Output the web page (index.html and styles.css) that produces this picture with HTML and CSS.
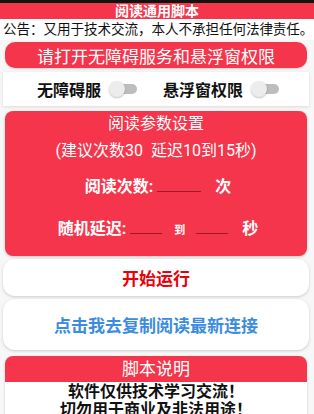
FILE: index.html
```html
<!DOCTYPE html>
<html lang="zh">
<head>
  <meta charset="UTF-8">
  <title>阅读通用脚本</title>
  <link rel="stylesheet" href="styles.css">
</head>
<body>

  <!-- Top -->
  <div class="statusbar"></div>
  <div class="titlebar">阅读通用脚本</div>
  <div class="notice">公告：又用于技术交流，本人不承担任何法律责任。</div>

  <button class="perm-btn">请打开无障碍服务和悬浮窗权限</button>

  <!-- Switches -->
  <div class="switch-card">
    <div class="switch-item">
      <span>无障碍服</span>
      <div class="toggle"><div class="track"></div><div class="thumb"></div></div>
    </div>
    <div class="switch-item">
      <span>悬浮窗权限</span>
      <div class="toggle"><div class="track"></div><div class="thumb"></div></div>
    </div>
  </div>

  <!-- Params -->
  <div class="param-card">
    <div class="param-title">阅读参数设置</div>
    <div class="param-hint">(建议次数30&nbsp;&nbsp;延迟10到15秒)</div>
    <div class="param-row">
      <span>阅读次数:</span>
      <span class="blank wide"></span>
      <span class="unit">次</span>
    </div>
    <div class="param-row">
      <span>随机延迟:</span>
      <span class="blank"></span>
      <span class="to">到</span>
      <span class="blank"></span>
      <span class="unit">秒</span>
    </div>
  </div>

  <button class="white-btn start">开始运行</button>
  <button class="white-btn copy">点击我去复制阅读最新连接</button>

  <!-- Info -->
  <div class="info-card">
    <div class="info-head">脚本说明</div>
    <div class="info-body">
      <div>软件仅供技术学习交流！</div>
      <div>切勿用于商业及非法用途！</div>
    </div>
  </div>

</body>
</html>
```

FILE: styles.css
```css
body {
  margin: 0;
  font-family: Roboto, "Noto Sans CJK SC", sans-serif;
  background-color: #f7f7f7;
  overflow: hidden;
}

.statusbar {
  height: 3px;
  background-color: #111;
}

.titlebar {
  height: 16px;
  line-height: 16px;
  background-color: #f4354b;
  color: white;
  font-size: 14px;
  font-weight: bold;
  text-align: center;
}

.notice {
  height: 21px;
  line-height: 21px;
  padding-left: 3px;
  font-size: 13.6px;
  letter-spacing: -0.1px;
  color: #111;
  background-color: white;
  white-space: nowrap;
}

.perm-btn {
  display: block;
  width: 302px;
  height: 26px;
  margin: 2px 0 0 5px;
  border: none;
  border-radius: 10px;
  background-color: #f4354b;
  color: white;
  font-family: inherit;
  font-size: 17px;
  padding: 0;
  box-shadow: 0 1px 2px rgba(0,0,0,0.15);
}

.switch-card {
  margin: 4px 5px 0 3px;
  height: 34px;
  background-color: white;
  box-shadow: 0 1px 3px rgba(0,0,0,0.12);
  display: flex;
  align-items: center;
  justify-content: center;
  gap: 26px;
  padding-left: 4px;
}

.switch-item {
  display: flex;
  align-items: center;
  gap: 8px;
  font-size: 16px;
  font-weight: bold;
  color: #111;
}

.toggle {
  position: relative;
  width: 28px;
  height: 16px;
}

.track {
  position: absolute;
  left: 4px;
  top: 3px;
  width: 24px;
  height: 10px;
  border-radius: 5px;
  background-color: #bdbdbd;
}

.thumb {
  position: absolute;
  left: 0;
  top: 0;
  width: 16px;
  height: 16px;
  border-radius: 50%;
  background-color: #ececec;
  box-shadow: 0 1px 2px rgba(0,0,0,0.25);
}

.param-card {
  margin: 5px 7px 0 5px;
  height: 145px;
  background-color: #f4354b;
  border-radius: 8px;
  color: white;
  text-align: center;
  box-shadow: 0 1px 3px rgba(0,0,0,0.2);
}

.param-title {
  padding-top: 2px;
  font-size: 16px;
  line-height: 22px;
}

.param-hint {
  font-size: 16px;
  line-height: 22px;
  margin-top: 5px;
}

.param-row {
  display: flex;
  justify-content: center;
  align-items: baseline;
  font-size: 16px;
  font-weight: bold;
  margin-top: 13px;
  line-height: 22px;
  padding-left: 4px;
}

.param-row + .param-row {
  margin-top: 19px;
}

.blank {
  display: inline-block;
  width: 32px;
  height: 16px;
  border-bottom: 1px solid #9a1a26;
  margin-left: 4px;
}

.blank.wide {
  width: 44px;
}

.to {
  font-size: 11px;
  margin: 0 7px 0 12px;
}

.unit {
  margin-left: 14px;
}

.white-btn {
  display: block;
  width: 306px;
  margin: 3px 0 0 3px;
  border: none;
  border-radius: 12px;
  background-color: white;
  font-family: inherit;
  font-size: 17px;
  padding: 0;
  box-shadow: 0 1px 3px rgba(0,0,0,0.18);
}

.start {
  height: 37px;
  color: #e8000b;
  font-weight: bold;
}

.copy {
  height: 51px;
  color: #3b8be0;
  font-weight: bold;
}

.info-card {
  margin: 6px 7px 0 5px;
  background-color: white;
  border-radius: 8px 8px 0 0;
  box-shadow: 0 1px 3px rgba(0,0,0,0.15);
}

.info-head {
  height: 26px;
  line-height: 26px;
  background-color: #f4354b;
  border-radius: 8px 8px 0 0;
  color: white;
  font-size: 17px;
  text-align: center;
}

.info-body {
  text-align: center;
  font-size: 16px;
  font-weight: bold;
  line-height: 18px;
  padding-top: 1px;
  color: #111;
}
```
